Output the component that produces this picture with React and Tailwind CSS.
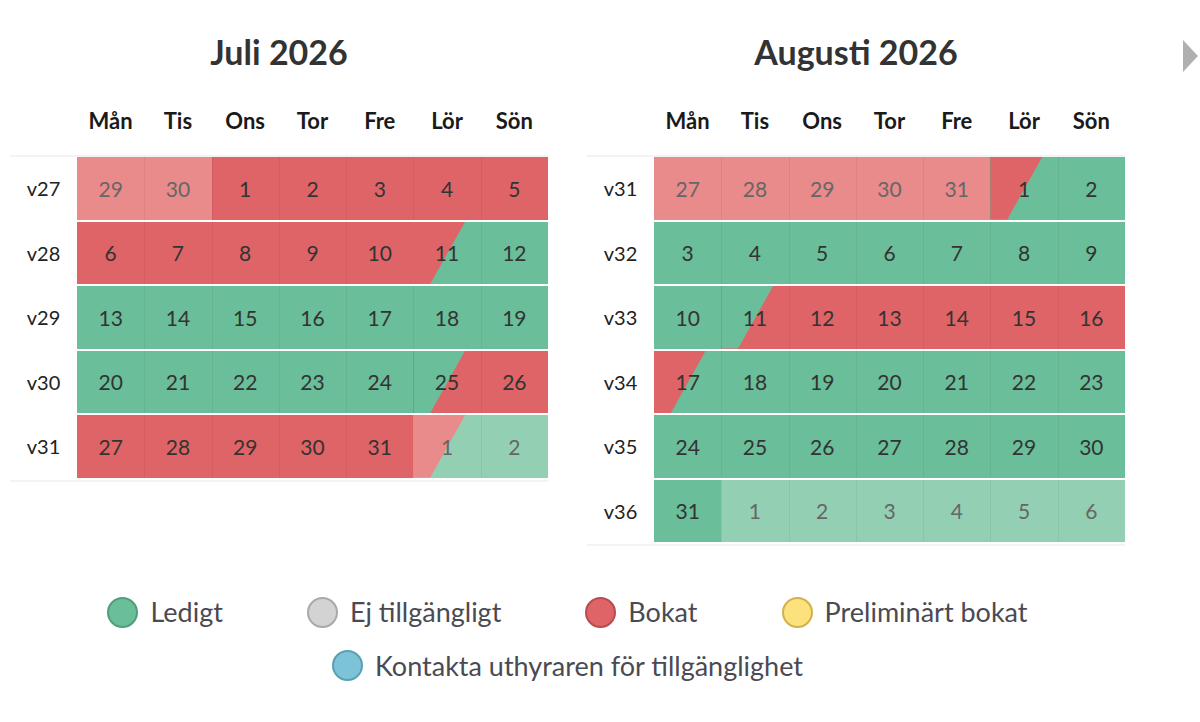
import React from "react";

const GREEN = "bg-[#6abe99]";
const RED = "bg-[#de6467]";
const LRED = "bg-[#e88b8a]";
const LGREEN = "bg-[#93cfb2]";

const DAYS = ["Mån", "Tis", "Ons", "Tor", "Fre", "Lör", "Sön"];

// helpers for building weeks
const g = (n) => ({ n, bg: GREEN });
const r = (n) => ({ n, bg: RED });
const lr = (n) => ({ n, bg: LRED, muted: true });
const lg = (n) => ({ n, bg: LGREEN, muted: true });
const split = (n, left, right, muted = false) => ({ n, bg: right, left, muted });

const JULY = [
  { week: "v27", days: [lr(29), lr(30), r(1), r(2), r(3), r(4), r(5)] },
  { week: "v28", days: [r(6), r(7), r(8), r(9), r(10), split(11, RED, GREEN), g(12)] },
  { week: "v29", days: [g(13), g(14), g(15), g(16), g(17), g(18), g(19)] },
  { week: "v30", days: [g(20), g(21), g(22), g(23), g(24), split(25, GREEN, RED), r(26)] },
  { week: "v31", days: [r(27), r(28), r(29), r(30), r(31), split(1, LRED, LGREEN, true), lg(2)] },
];

const AUGUST = [
  { week: "v31", days: [lr(27), lr(28), lr(29), lr(30), lr(31), split(1, RED, GREEN), g(2)] },
  { week: "v32", days: [g(3), g(4), g(5), g(6), g(7), g(8), g(9)] },
  { week: "v33", days: [g(10), split(11, GREEN, RED), r(12), r(13), r(14), r(15), r(16)] },
  { week: "v34", days: [split(17, RED, GREEN), g(18), g(19), g(20), g(21), g(22), g(23)] },
  { week: "v35", days: [g(24), g(25), g(26), g(27), g(28), g(29), g(30)] },
  { week: "v36", days: [g(31), lg(1), lg(2), lg(3), lg(4), lg(5), lg(6)] },
];

const LEGEND_TOP = [
  { label: "Ledigt", dot: "bg-[#6abe99] border-[#4f9e7c]" },
  { label: "Ej tillgängligt", dot: "bg-[#d3d3d3] border-[#a9a9a9]" },
  { label: "Bokat", dot: "bg-[#de6467] border-[#b84c50]" },
  { label: "Preliminärt bokat", dot: "bg-[#fde17c] border-[#d3b14c]" },
];

function DayCell({ day, first }) {
  return (
    <div className={`relative flex-1 flex items-center justify-center ${day.bg}`}>
      {day.left && (
        <div
          className={`absolute inset-0 ${day.left} [clip-path:polygon(0_0,77%_0,25%_100%,0_100%)]`}
        ></div>
      )}
      {/* thin divider between days */}
      {!first && <span className="absolute inset-y-0 left-0 w-px bg-black/5"></span>}
      <span className={`relative text-[21px] ${day.muted ? "text-[#666]" : "text-[#333]"}`}>{day.n}</span>
    </div>
  );
}

function Month({ title, weeks }) {
  return (
    <div className="w-[538px]">
      <h2 className="h-[40px] leading-[40px] text-center text-[34px] font-bold text-[#333]">{title}</h2>

      {/* weekday header */}
      <div className="flex mt-[28px] h-[40px] items-center">
        <div className="w-[67px]"></div>
        {DAYS.map((d) => (
          <div key={d} className="flex-1 text-center text-[22px] font-bold text-[#1a1a1a]">
            {d}
          </div>
        ))}
      </div>

      {/* weeks */}
      <div className="mt-[15px] border-t-2 border-b-2 border-[#f1f3f5]">
        {weeks.map((w) => (
          <div key={w.week} className="flex h-[64.5px] border-b-2 border-white">
            <div className="w-[67px] flex items-center justify-center text-[20px] text-[#222]">{w.week}</div>
            <div className="flex flex-1">
              {w.days.map((d, i) => (
                <DayCell key={i} day={d} first={i === 0} />
              ))}
            </div>
          </div>
        ))}
      </div>
    </div>
  );
}

function LegendItem({ label, dot }) {
  return (
    <div className="flex items-center gap-[12px]">
      <span className={`w-[31px] h-[31px] rounded-full border-2 ${dot}`}></span>
      <span className="text-[27px] text-[#4a4a52]">{label}</span>
    </div>
  );
}

export default function App() {
  return (
    <div className="relative w-[1200px] h-[722px] bg-white overflow-hidden font-['Lato',sans-serif]">
      {/* next month arrow */}
      <button className="absolute left-[1183px] top-[40px]">
        <svg width="15" height="32" viewBox="0 0 15 32">
          <polygon points="0,0 15,16 0,32" fill="#b0b0b0" />
        </svg>
      </button>

      <div className="flex gap-[39px] pl-[10px] pt-[32px]">
        <Month title="Juli 2026" weeks={JULY} />
        <Month title="Augusti 2026" weeks={AUGUST} />
      </div>

      {/* legend */}
      <div className="w-[1115px] ml-[10px] mt-[46px] flex flex-col items-center gap-[13px]">
        <div className="flex items-center gap-x-[84px]">
          {LEGEND_TOP.map((l) => (
            <LegendItem key={l.label} {...l} />
          ))}
        </div>
        <LegendItem label="Kontakta uthyraren för tillgänglighet" dot="bg-[#7cc3d8] border-[#5a9fb4]" />
      </div>
    </div>
  );
}
